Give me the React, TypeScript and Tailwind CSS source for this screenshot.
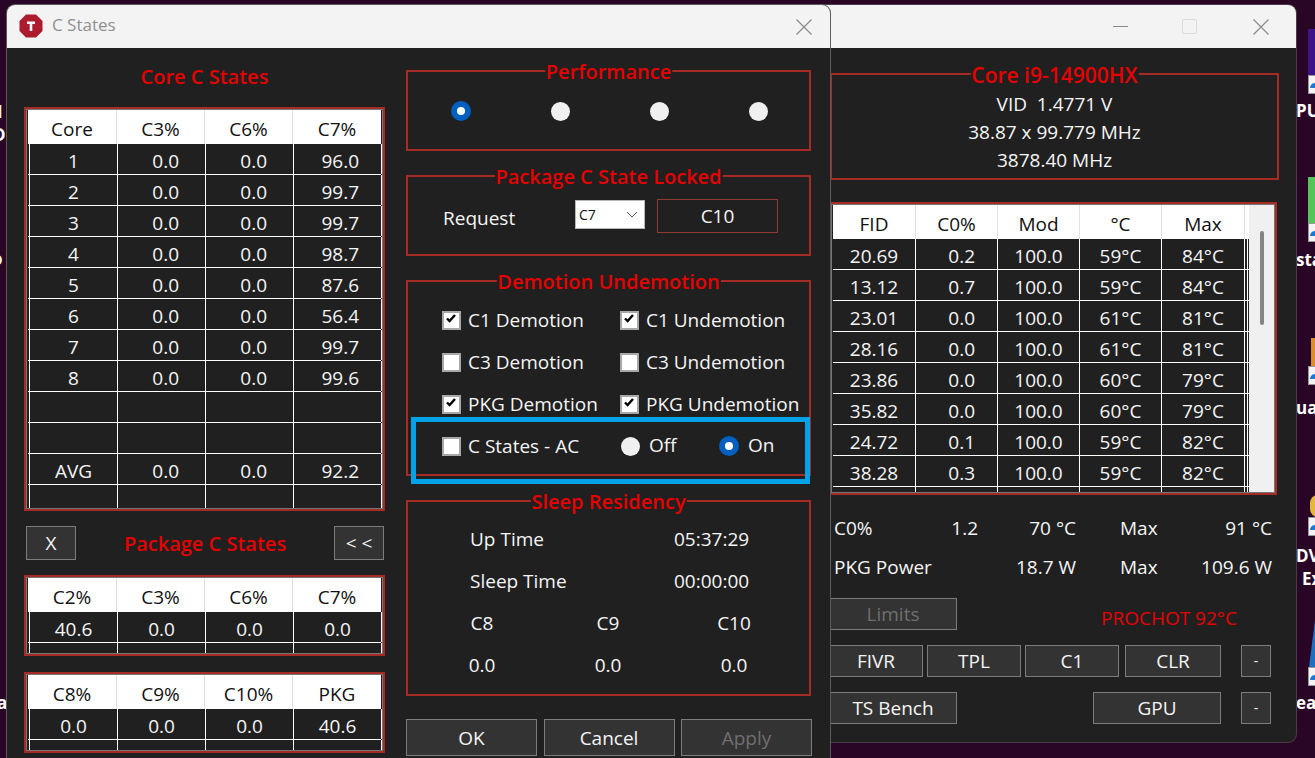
import React from "react";

const font = { fontFamily: '"Open Sans", "Noto Sans", sans-serif' };

function Table({
  className,
  head,
  rows,
  grid,
  rowGrid,
  first,
  align,
  scroll,
  sidePad,
}: {
  className: string;
  head: string[];
  rows: string[][];
  grid: string;
  rowGrid: string;
  first?: boolean;
  align: string[];
  scroll?: boolean;
  sidePad?: boolean;
}) {
  return (
    <div className={`border-2 border-[#a62b25] overflow-hidden ${className}`}>
      <div className={`flex h-full w-full overflow-hidden border border-[#777777] ${sidePad ? "px-px" : "pl-px"}`}>
        <div className="flex-1 min-w-0">
          <div className={`grid h-[34px] bg-white text-[#111111] ${grid}`}>
            {head.map((h, i) => (
              <div key={i} className="flex items-center justify-center border-r border-[#e2e2e2] pt-[4px] last:border-r-0">
                {h}
              </div>
            ))}
          </div>
          {rows.map((r, ri) => (
            <div key={ri} className={`grid h-[31px] border-b border-white ${rowGrid}`}>
              {r.map((c, i) => (
                <div
                  key={i}
                  className={`flex items-center border-r border-white pt-[4px] ${first && i === 0 ? "border-l ml-px" : ""} ${align[i]}`}
                >
                  {c}
                </div>
              ))}
            </div>
          ))}
        </div>
        {scroll && (
          <div className="w-[25px] shrink-0 bg-[#f0f0f0] pt-[26px]">
            <div className="mx-auto h-[94px] w-[4px] rounded-full bg-[#858585]" />
          </div>
        )}
      </div>
    </div>
  );
}

function Group({
  title,
  className,
  titleSize = "text-[20px]",
  children,
}: {
  title: string;
  className: string;
  titleSize?: string;
  children?: React.ReactNode;
}) {
  return (
    <div className={`relative border-2 border-[#a62b25] ${className}`}>
      <div
        className={`absolute left-1/2 top-[-12px] -translate-x-1/2 whitespace-nowrap bg-[#202020] px-[1px] font-semibold leading-[24px] text-[#e60000] ${titleSize}`}
      >
        {title}
      </div>
      {children}
    </div>
  );
}

function Radio({ on }: { on?: boolean }) {
  return on ? (
    <span className="flex h-[20px] w-[20px] shrink-0 items-center justify-center rounded-full bg-[#0060c0]">
      <span className="h-[8px] w-[8px] rounded-full bg-white" />
    </span>
  ) : (
    <span className="ml-px mt-px block h-[19px] w-[19px] shrink-0 rounded-full bg-[#f0f0f0]" />
  );
}

function Check({ on, label }: { on?: boolean; label: string }) {
  return (
    <div className="flex items-center gap-[7px] whitespace-nowrap">
      <span className="flex h-[19px] w-[19px] shrink-0 items-center justify-center border-2 border-[#a8a8a8] bg-white">
        {on && (
          <svg width="10" height="9" viewBox="0 0 10 9" className="-translate-x-px -translate-y-[2px]">
            <path d="M1 4.5 L3.6 7 L9 1" fill="none" stroke="#000" strokeWidth="2.4" />
          </svg>
        )}
      </span>
      <span>{label}</span>
    </div>
  );
}

function Btn({ className, children }: { className: string; children: React.ReactNode }) {
  return (
    <div className={`flex items-center justify-center border-[1.5px] border-[#7c7c7c] bg-[#333333] ${className}`}>
      {children}
    </div>
  );
}

function CloseX() {
  return (
    <svg width="16" height="16" viewBox="0 0 16 16" className="shrink-0">
      <path d="M0.5 0.5 L15.5 15.5 M15.5 0.5 L0.5 15.5" stroke="#8a8a8a" strokeWidth="1.2" fill="none" />
    </svg>
  );
}

function Badge() {
  return (
    <div className="h-[19px] border border-[#999999] bg-[#f4f4f4] pl-[1px] pt-[7px]">
      <div className="h-[5px] w-[5px] rounded-tl-full bg-[#1f78d0]" />
    </div>
  );
}

function Shortcut({ className, color, bar }: { className: string; color: string; bar: string }) {
  return (
    <div className={`absolute left-[1308px] w-[10px] ${className}`}>
      <div className={`${color} ${bar}`} />
      <Badge />
    </div>
  );
}

const Desk = ({ className, children }: { className: string; children: React.ReactNode }) => (
  <div className={`absolute text-[17px] font-bold leading-[22px] text-white ${className}`}>{children}</div>
);

const coreRows = [
  ["1", "0.0", "0.0", "96.0"],
  ["2", "0.0", "0.0", "99.7"],
  ["3", "0.0", "0.0", "99.7"],
  ["4", "0.0", "0.0", "98.7"],
  ["5", "0.0", "0.0", "87.6"],
  ["6", "0.0", "0.0", "56.4"],
  ["7", "0.0", "0.0", "99.7"],
  ["8", "0.0", "0.0", "99.6"],
  ["", "", "", ""],
  ["", "", "", ""],
  ["AVG", "0.0", "0.0", "92.2"],
  ["", "", "", ""],
];

const fidRows = [
  ["20.69", "0.2", "100.0", "59°C", "84°C", ""],
  ["13.12", "0.7", "100.0", "59°C", "84°C", ""],
  ["23.01", "0.0", "100.0", "61°C", "81°C", ""],
  ["28.16", "0.0", "100.0", "61°C", "81°C", ""],
  ["23.86", "0.0", "100.0", "60°C", "79°C", ""],
  ["35.82", "0.0", "100.0", "60°C", "79°C", ""],
  ["24.72", "0.1", "100.0", "59°C", "82°C", ""],
  ["38.28", "0.3", "100.0", "59°C", "82°C", ""],
  ["", "", "", "", "", ""],
];

export default function App() {
  const c = "justify-center";
  const r = "justify-end pr-[26px]";
  const r2 = "justify-end pr-[22px]";
  const grid4 = "grid-cols-[89px_88px_88px_88px]";
  const rowGrid4 = "grid-cols-[90px_88px_88px_88px]";
  const gridFid = "grid-cols-[83px_82px_82px_82px_83px_3px]";
  return (
    <div
      className="relative h-[758px] w-[1315px] overflow-hidden bg-[#2a0626] text-[19px] leading-[24px] text-[#f5f5f5]"
      style={font}
    >
      {/* desktop icons showing at the screen edges */}
      <Shortcut className="top-[29px]" color="bg-[#3a1488]" bar="h-[46px]" />
      <Shortcut className="top-[177px]" color="bg-[#55c45a]" bar="h-[46px]" />
      <Shortcut className="top-[338px]" color="bg-[#d9902a]" bar="h-[28px] w-[7px] ml-[3px]" />
      <Shortcut className="top-[495px]" color="bg-[#e2b93a]" bar="h-[22px] ml-[2px] rounded-tl-full rounded-bl-full" />
      <div className="absolute left-[1308px] top-[620px] w-[10px]">
        <svg width="10" height="47" viewBox="0 0 10 47" className="block">
          <polygon points="1,47 7,0 7,47" fill="#1f6fc0" />
        </svg>
        <Badge />
      </div>
      <Desk className="left-[1296px] top-[100px]">PU</Desk>
      <Desk className="left-[1296px] top-[249px]">sta</Desk>
      <Desk className="left-[1296px] top-[397px]">ua</Desk>
      <Desk className="left-[1296px] top-[545px]">DV</Desk>
      <Desk className="left-[1302px] top-[568px]">Ex</Desk>
      <Desk className="left-[1296px] top-[692px]">eaw</Desk>
      <Desk className="left-[-3px] top-[101px] text-[#f2b64a]">I</Desk>
      <Desk className="left-[-7px] top-[124px] whitespace-nowrap text-[#dfe8f5]">DI</Desk>
      <Desk className="left-[-8px] top-[248px] text-[#f2b64a]">o</Desk>
      <Desk className="left-[-3px] top-[692px]">a</Desk>

      {/* window behind */}
      <div className="absolute left-[760px] top-[5px] flex h-[737px] w-[536px] flex-col overflow-hidden rounded-[8px] bg-[#202020] shadow-[0_0_0_1px_#4c3c4a]">
        <div className="flex h-[43px] shrink-0 items-center justify-end bg-[#f3f3f3] pr-[27px]">
          <div className="h-px w-[15px] bg-[#8a8a8a]" />
          <div className="ml-[54px] h-[15px] w-[15px] rounded-[2px] border border-[#dcdcdc]" />
          <div className="ml-[56px]">
            <CloseX />
          </div>
        </div>
        <div className="flex flex-col pl-[70px] pt-[25px]">
          <Group title="Core i9-14900HX" titleSize="text-[21px]" className="h-[107px] w-[449px]">
            <div className="flex flex-col items-center pt-[15px] leading-[28px]">
              <div className="whitespace-pre">VID  1.4771 V</div>
              <div>38.87 x 99.779 MHz</div>
              <div>3878.40 MHz</div>
            </div>
          </Group>
          <Table
            className="ml-[-1px] mt-[22px] h-[293px] w-[448px]"
            head={["FID", "C0%", "Mod", "°C", "Max", ""]}
            rows={fidRows}
            grid={gridFid}
            rowGrid={gridFid}
            align={[c, r2, c, c, c, c]}
            scroll
          />
          <div className="mt-[13px] grid h-[39px] grid-cols-[144px_98px_44px_152px] items-center pl-[4px]">
            <div className="flex justify-between">
              <span>C0%</span>
              <span>1.2</span>
            </div>
            <div className="text-right">70 °C</div>
            <div />
            <div className="flex justify-between">
              <span>Max</span>
              <span>91 °C</span>
            </div>
          </div>
          <div className="grid h-[39px] grid-cols-[144px_98px_44px_152px] items-center pl-[4px]">
            <div>PKG Power</div>
            <div className="text-right">18.7 W</div>
            <div />
            <div className="flex justify-between">
              <span>Max</span>
              <span>109.6 W</span>
            </div>
          </div>
          <div className="ml-[-1px] mt-[12px] flex h-[32px]">
            <Btn className="w-[128px] text-[#6f6f6f]">Limits</Btn>
            <div className="ml-[144px] pt-[8px] text-[#e60000]">PROCHOT 92°C</div>
          </div>
          <div className="ml-[-1px] mt-[15px] flex h-[32px]">
            <Btn className="w-[94px]">FIVR</Btn>
            <Btn className="ml-[4px] w-[94px]">TPL</Btn>
            <Btn className="ml-[4px] w-[94px]">C1</Btn>
            <Btn className="ml-[6px] w-[96px]">CLR</Btn>
            <Btn className="ml-[20px] w-[30px] text-[14px]">-</Btn>
          </div>
          <div className="ml-[-1px] mt-[15px] flex h-[32px]">
            <Btn className="w-[128px]">TS Bench</Btn>
            <Btn className="ml-[136px] w-[128px]">GPU</Btn>
            <Btn className="ml-[20px] w-[30px] text-[14px]">-</Btn>
          </div>
        </div>
      </div>

      {/* C States dialog */}
      <div className="absolute left-[7px] top-[5px] h-[770px] w-[823px] overflow-hidden rounded-t-[8px] bg-[#202020] shadow-[0_0_0_1px_#5a5a5a]">
        <div className="flex h-[43px] items-center bg-[#f3f3f3] pl-[12px] pr-[18px]">
          <svg width="24" height="24" viewBox="0 0 24 24" className="shrink-0 -translate-y-px">
            <path d="M7 0.5 H17 L23.5 7 V17 L17 23.5 H7 L0.5 17 V7 Z" fill="#ad1c2e" />
            <path d="M8 7.5 H16 V10 H13.3 V17 H10.7 V10 H8 Z" fill="#ffffff" />
          </svg>
          <div className="ml-[9px] flex-1 pb-[3px] text-[17px] text-[#8f8f8f]">C States</div>
          <CloseX />
        </div>
        <div className="flex pl-[17px]">
          <div className="w-[361px] pt-[16px]">
            <div className="h-[26px] text-center text-[20px] font-semibold leading-[26px] text-[#e60000]">Core C States</div>
            <Table
              className="mt-[17px] h-[404px]"
              head={["Core", "C3%", "C6%", "C7%"]}
              rows={coreRows}
              grid={grid4}
              rowGrid={rowGrid4}
              first
              sidePad
              align={[c, r, r, r2]}
            />
            <div className="mt-[15px] flex h-[34px] items-center justify-between pl-[2px] pr-px">
              <Btn className="h-[34px] w-[50px]">X</Btn>
              <div className="pt-px text-[20px] font-semibold text-[#e60000]">Package C States</div>
              <Btn className="h-[34px] w-[50px]">{"< <"}</Btn>
            </div>
            <Table
              className="mt-[15px] h-[81px]"
              head={["C2%", "C3%", "C6%", "C7%"]}
              rows={[["40.6", "0.0", "0.0", "0.0"], ["", "", "", ""]]}
              grid={grid4}
              rowGrid={rowGrid4}
              first
              sidePad
              align={[c, c, c, c]}
            />
            <Table
              className="mt-[16px] h-[81px]"
              head={["C8%", "C9%", "C10%", "PKG"]}
              rows={[["0.0", "0.0", "0.0", "40.6"], ["", "", "", ""]]}
              grid={grid4}
              rowGrid={rowGrid4}
              first
              sidePad
              align={[c, c, c, c]}
            />
          </div>

          <div className="ml-[21px] w-[405px] pt-[22px]">
            <Group title="Performance" className="h-[81px]">
              <div className="flex gap-[79px] pl-[43px] pt-[29px]">
                <div className="w-[20px]"><Radio on /></div>
                <div className="w-[20px]"><Radio /></div>
                <div className="w-[20px]"><Radio /></div>
                <div className="w-[20px]"><Radio /></div>
              </div>
            </Group>
            <Group title="Package C State Locked" className="mt-[24px] h-[81px]">
              <div className="flex items-start pl-[35px] pt-[22px]">
                <div className="w-[132px] leading-[38px]">Request</div>
                <div className="mt-px flex h-[29px] w-[70px] items-center justify-between border border-[#b8b8b8] bg-white pl-[3px] pr-[6px] text-[14px] text-[#111111]">
                  <span>C7</span>
                  <svg width="12" height="7" viewBox="0 0 12 7">
                    <path d="M1 1 L6 6 L11 1" fill="none" stroke="#555" strokeWidth="1" />
                  </svg>
                </div>
                <div className="ml-[12px] flex h-[34px] w-[121px] items-center justify-center border border-[#8f3a30]">
                  C10
                </div>
              </div>
            </Group>
            <Group title="Demotion Undemotion" className="mt-[24px] h-[196px]">
              <div className="grid grid-cols-[178px_1fr] auto-rows-[42px] items-center pl-[34px] pt-[17px]">
                <Check on label="C1 Demotion" />
                <Check on label="C1 Undemotion" />
                <Check label="C3 Demotion" />
                <Check label="C3 Undemotion" />
                <Check on label="PKG Demotion" />
                <Check on label="PKG Undemotion" />
                <Check label="C States - AC" />
                <div className="flex items-center">
                  <Radio />
                  <span className="ml-[9px] w-[70px] -translate-y-px">Off</span>
                  <Radio on />
                  <span className="ml-[9px] -translate-y-px">On</span>
                </div>
              </div>
              <div className="absolute left-[3px] top-[135px] h-[67px] w-[399px] border-[5px] border-[#00a2e8]" />
            </Group>
            <Group title="Sleep Residency" className="mt-[24px] h-[196px]">
              <div className="pt-[16px]">
                <div className="flex h-[42px] items-center pl-[62px]">
                  <div className="w-[204px]">Up Time</div>
                  <div>05:37:29</div>
                </div>
                <div className="flex h-[42px] items-center pl-[62px]">
                  <div className="w-[204px]">Sleep Time</div>
                  <div>00:00:00</div>
                </div>
                <div className="grid h-[42px] grid-cols-[126px_126px_126px] items-center pl-[11px] text-center">
                  <div>C8</div>
                  <div>C9</div>
                  <div>C10</div>
                </div>
                <div className="grid h-[42px] grid-cols-[126px_126px_126px] items-center pl-[11px] text-center">
                  <div>0.0</div>
                  <div>0.0</div>
                  <div>0.0</div>
                </div>
              </div>
            </Group>
            <div className="mt-[23px] flex h-[37px] w-[406px] justify-between">
              <Btn className="w-[131px]">OK</Btn>
              <Btn className="w-[131px]">Cancel</Btn>
              <Btn className="w-[131px] text-[#6f6f6f]">Apply</Btn>
            </div>
          </div>
        </div>
      </div>
    </div>
  );
}
